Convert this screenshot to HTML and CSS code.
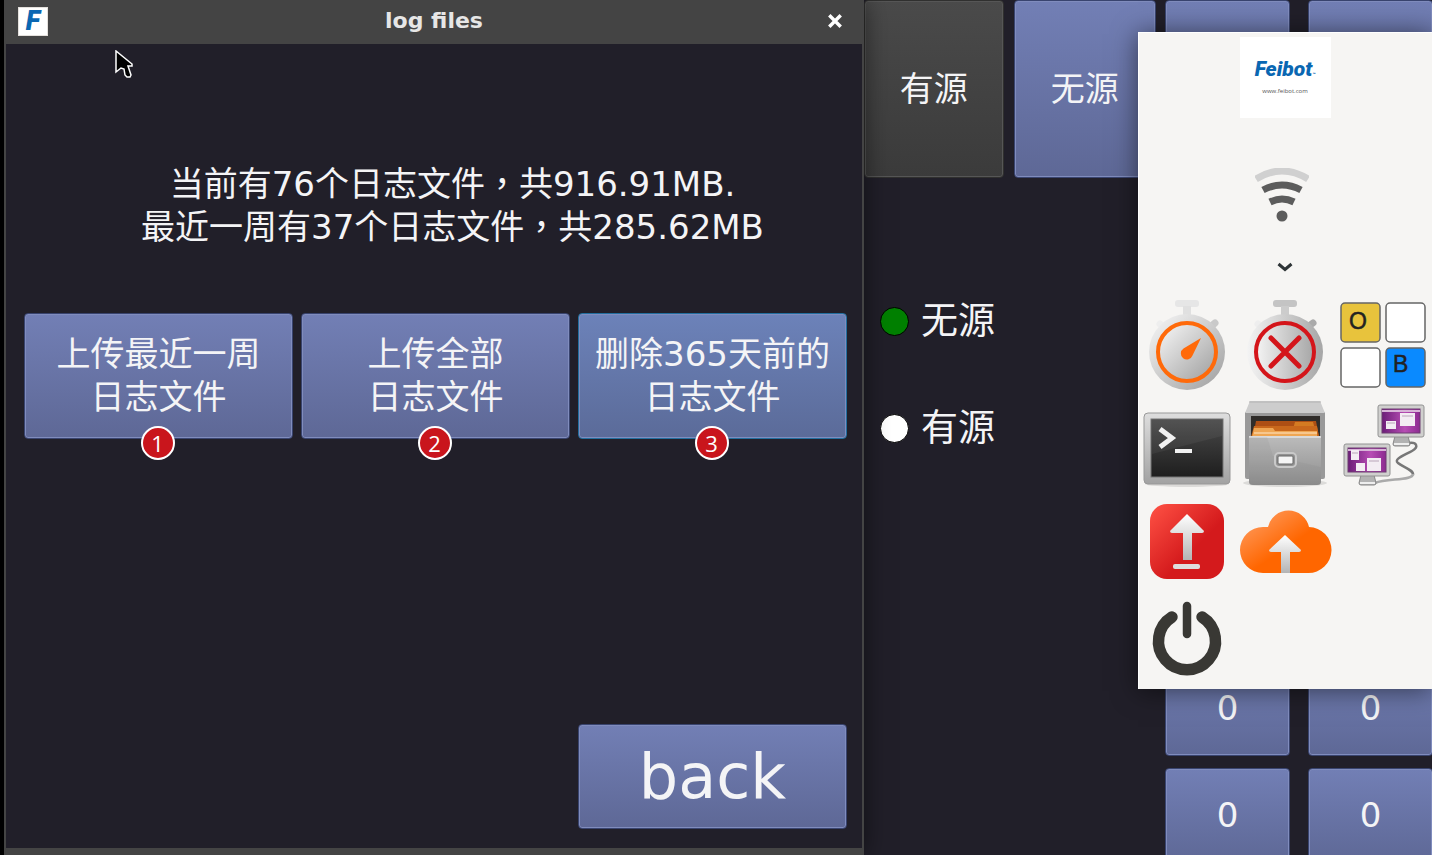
FILE: index.html
```html
<!DOCTYPE html>
<html lang="zh-CN">
<head>
<meta charset="utf-8">
<title>log files</title>
<link rel="stylesheet" href="styles.css">
</head>
<body>
<div class="desktop">
  <section class="dialog" role="dialog" aria-labelledby="dialog-title">
    <header class="titlebar">
      <span class="app-icon" aria-hidden="true">F</span>
      <h1 class="title" id="dialog-title">log files</h1>
      <button class="close" type="button" aria-label="close">
        <svg width="16" height="16" viewBox="0 0 14 14"><path d="M2 2l10 10M12 2L2 12" stroke="#fff" stroke-width="3"/></svg>
      </button>
    </header>
    <div class="dialog-body">
      <p class="message">当前有76个日志文件<span lang="zh-TW">，</span>共916.91MB.<br>最近一周有37个日志文件<span lang="zh-TW">，</span>共285.62MB</p>
      <div class="actions">
        <div class="action"><button class="key" type="button">上传最近一周<br>日志文件</button><span class="badge">1</span></div>
        <div class="action"><button class="key" type="button">上传全部<br>日志文件</button><span class="badge">2</span></div>
        <div class="action"><button class="key key-focus" type="button">删除365天前的<br>日志文件</button><span class="badge">3</span></div>
      </div>
      <div class="actions footer"><button class="key back" type="button">back</button></div>
    </div>
    <svg class="cursor" width="18" height="28" viewBox="0 0 18 28"><path d="M1 1v21l5-4 3 1 1 6 2 2h3l1-2-2-6-1-3h4v-2z" fill="#000" stroke="#fff" stroke-width="1.5"/></svg>
  </section>

  <main class="app">
    <div class="app-main">
      <div class="tabs">
        <button class="key key-dark" type="button">有源</button>
        <button class="key" type="button">无源</button>
      </div>
      <div class="sources">
        <label class="source"><input class="dot dot-green" type="radio" name="source" checked>无源</label>
        <label class="source"><input class="dot" type="radio" name="source">有源</label>
      </div>
    </div>
    <div class="keypad">
      <div class="keys">
        <button class="key" type="button" aria-label="left"></button>
        <button class="key" type="button" aria-label="right"></button>
      </div>
      <div class="keys">
        <button class="key" type="button">0</button>
        <button class="key" type="button">0</button>
        <button class="key" type="button">0</button>
        <button class="key" type="button">0</button>
      </div>
    </div>
  </main>

  <aside class="panel">
    <div class="logo"><span class="brand">Feibot<span class="tm">™</span></span><span class="site">www.feibot.com</span></div>
    <svg class="wifi" width="54" height="54" viewBox="0 0 54 54" fill="none" stroke="#5c5c5c" stroke-width="7">
      <path d="M1 11Q27-5 53 11" stroke="#d0d0d0"/><path d="M8 22Q27 12 46 22"/><path d="M15 34Q27 28 39 34"/><circle cx="27" cy="48" r="5.5" fill="#5c5c5c" stroke="none"/>
    </svg>
    <button class="expand" type="button" aria-label="expand"><svg width="16" height="10" viewBox="0 0 16 10"><path d="M1.5 2L8 7.5 14.5 2" fill="none" stroke="#2e3436" stroke-width="3"/></svg></button>
    <div class="launchers">
      <button class="launcher" type="button" aria-label="timer">
        <svg viewBox="0 0 98 98">
          <defs><linearGradient id="silver" x1="0" y1="0" x2="1" y2="1"><stop offset=".1" stop-color="#f0f0f0"/><stop offset="1" stop-color="#9d9d9d"/></linearGradient><linearGradient id="silver-h"><stop offset="0" stop-color="#f4f4f4"/><stop offset="1" stop-color="#a6a6a6"/></linearGradient></defs>
          <rect x="37" y="3" width="24" height="7" rx="3" fill="#e6e6e6"/><path d="M45 9h8v12h-8z" fill="#e0e0e0"/>
          <path d="M70 32l7-6" stroke="#c9c9c9" stroke-width="7" stroke-linecap="round"/><path d="M29 32l-7-5" stroke="#eee" stroke-width="7" stroke-linecap="round"/>
          <circle cx="49" cy="55" r="38" fill="url(#silver)"/><circle cx="49" cy="55" r="29" fill="url(#silver)" stroke="#ff6a0a" stroke-width="4"/>
          <path d="M63 41L54.5 58.500a6 6 0 1 1-9-7z" fill="#ff6a0a"/>
        </svg>
      </button>
      <button class="launcher" type="button" aria-label="stop timer">
        <svg viewBox="0 0 98 98">
          <rect x="37" y="3" width="24" height="7" rx="3" fill="#c4c4c4"/><path d="M45 9h8v12h-8z" fill="#ccc"/>
          <path d="M70 31l7-5" stroke="#aaa" stroke-width="7" stroke-linecap="round"/><path d="M29 32l-7-5" stroke="#eee" stroke-width="7" stroke-linecap="round"/>
          <circle cx="49" cy="55" r="38" fill="url(#silver-h)"/><circle cx="49" cy="55" r="29" fill="url(#silver-h)" stroke="#d4151a" stroke-width="4"/>
          <path d="M35 41l28 28M63 41L35 69" stroke="#d4151a" stroke-width="5" stroke-linecap="round"/>
        </svg>
      </button>
      <button class="launcher" type="button" aria-label="OB">
        <svg viewBox="0 0 98 98">
          <g stroke="#666" stroke-width="1.5"><rect x="7" y="6" width="39" height="39" rx="4" fill="#e8c33c"/><rect x="52" y="6" width="39" height="39" rx="4" fill="#fff"/><rect x="7" y="51" width="39" height="39" rx="4" fill="#fff"/><rect x="52" y="51" width="39" height="39" rx="4" fill="#0a8aff"/></g>
          <text class="tile" x="15" y="32">O</text><text class="tile" x="59" y="75">B</text>
        </svg>
      </button>
      <button class="launcher" type="button" aria-label="terminal">
        <svg viewBox="0 0 98 98">
          <defs><linearGradient id="screen" x1="0" y1="0" x2="0" y2="1"><stop offset="0" stop-color="#4a4a4a"/><stop offset="1" stop-color="#1e1e1e"/></linearGradient><linearGradient id="frame" x1="0" y1="0" x2="0" y2="1"><stop offset="0" stop-color="#dedede"/><stop offset="1" stop-color="#a2a2a2"/></linearGradient></defs>
          <ellipse cx="49" cy="89" rx="42" ry="3" fill="#dcdbd9"/><rect x="6" y="18" width="86" height="71" rx="4" fill="url(#frame)" stroke="#999"/>
          <rect x="13" y="24" width="72" height="58" fill="url(#screen)" stroke="#777"/><path d="M14 25h70v16L14 59z" fill="#fff" opacity=".05"/>
          <path d="M22 34l12 9-12 9" fill="none" stroke="#f2f2f2" stroke-width="5"/><path d="M37 56h17" stroke="#f2f2f2" stroke-width="4"/>
        </svg>
      </button>
      <button class="launcher" type="button" aria-label="files">
        <svg viewBox="0 0 98 98">
          <defs><linearGradient id="drawer" x1="0" y1="0" x2="0" y2="1"><stop offset="0" stop-color="#bcbcbc"/><stop offset="1" stop-color="#8e8e8e"/></linearGradient></defs>
          <ellipse cx="49" cy="88" rx="42" ry="4" fill="#dcdbd9"/><path d="M9 17h80v65q0 2-2 2H11q-2 0-2-2z" fill="#999"/><path d="M14 6h70l5 12H9z" fill="#cdcdcd"/><path d="M13 7h72" stroke="#b4b4b4"/>
          <path d="M15 21h69v21H15z" fill="#302d2a"/><path d="M20 26h60l3 16H17z" fill="#ae4f14"/><path d="M59 27h18l2 7H57z" fill="#d47b22"/><path d="M18 31h63l2 11H15z" fill="#c9681c"/><path d="M18 33h19l2 3h42v6H16z" fill="#efa653"/><path d="M18 38h63" stroke="#f7c78e" stroke-width="2"/>
          <path d="M13 41h72v46q0 3-4 3H17q-4 0-4-3z" fill="url(#drawer)"/><path d="M13 42h72" stroke="#dadada" stroke-width="2"/><path d="M31 42l6 19L85 72v14q0 4-4 4H17q-4 0-4-3V42z" fill="#777" opacity=".1"/>
          <rect x="39" y="58" width="21" height="14" rx="4" fill="#929292" stroke="#c9c9c9" stroke-width="2"/><rect x="42" y="61" width="15" height="8" rx="1" fill="#f5f5f5" stroke="#666"/>
        </svg>
      </button>
      <button class="launcher" type="button" aria-label="remote desktop">
        <svg viewBox="0 0 98 98">
          <defs><linearGradient id="violet"><stop offset="0" stop-color="#6c1d78"/><stop offset=".6" stop-color="#b74db4"/><stop offset="1" stop-color="#8c2b90"/></linearGradient>
          <g id="monitor"><path d="M17 31h13l2 8q0 2-2 2H17q-2 0-2-2z" fill="#b2b2b2" stroke="#888"/><path d="M16 39h15" stroke="#eee" stroke-width="2"/><rect width="46" height="32" rx="2" fill="#d0d0ce" stroke="#929292"/><rect x="4" y="4" width="38" height="24" fill="url(#violet)" stroke="#6d3c70"/><path d="M4 6h38" stroke="#d8b5d8" stroke-width="2"/></g></defs>
          <path d="M75 48c8-1 10 4 3 8s-19 8-14 12 16 7 15 12" fill="none" stroke="#777" stroke-width="2.5"/><path d="M79 79c0 7-26 4-38 9" fill="none" stroke="#aaa" stroke-width="2.5"/>
          <use href="#monitor" x="44" y="10"/><use href="#monitor" x="10" y="49"/>
          <g fill="#f3edf3"><path d="M66 18h15v13H66zM52 26h10v8H52zM17 55h8v10h-8zM33 63h14v13H33zM22 68h9v8h-9z"/></g><path d="M68 21h11M53 28h8M18 58h6M35 66h10" stroke="#b9a5b9"/>
        </svg>
      </button>
      <button class="launcher" type="button" aria-label="upload">
        <svg viewBox="0 0 98 98">
          <defs><linearGradient id="red" x1="0" y1="0" x2="1" y2="1"><stop offset="0" stop-color="#ff5245"/><stop offset=".6" stop-color="#d41a1c"/></linearGradient><linearGradient id="arrow" x1="0" y1="0" x2="0" y2="1"><stop offset="0" stop-color="#fff"/><stop offset="1" stop-color="#b4b4b4"/></linearGradient></defs>
          <rect x="12" y="11" width="74" height="75" rx="17" fill="url(#red)"/><path d="M49 21l17 17q0 2-2 2H54v27h-9V40H34q-2 0-2-2z" fill="url(#arrow)"/><rect x="35" y="71" width="27" height="5" rx="2" fill="#dedede"/>
        </svg>
      </button>
      <button class="launcher" type="button" aria-label="cloud upload">
        <svg viewBox="0 0 98 98">
          <defs><linearGradient id="orange" x1="0" y1="0" x2="1" y2="1"><stop offset=".1" stop-color="#ff9a5c"/><stop offset=".55" stop-color="#ff6600"/></linearGradient></defs>
          <path d="M27 80a23 23 0 1 1 0-46h5a21 21 0 0 1 41 0a23 23 0 0 1-1 46z" fill="url(#orange)"/><path d="M49 42l16 15q0 2-2 2h-9v21h-9V59H35q-2 0-2-2z" fill="url(#arrow)"/>
        </svg>
      </button>
      <button class="launcher power" type="button" aria-label="power">
        <svg viewBox="0 0 98 98" fill="none" stroke="#393834" stroke-linecap="round"><path d="M34 26A28.5 28.5 0 1 0 64 26" stroke-width="11.5"/><path d="M49 15v28" stroke-width="8.5"/></svg>
      </button>
    </div>
  </aside>
</div>
</body>
</html>
```

FILE: styles.css
```css
* { box-sizing: border-box; }

body {
  margin: 0;
  background: #000;
  color: #f4f4f6;
  font-family: "DejaVu Sans", "Noto Sans CJK SC", sans-serif;
  font-size: 34px;
  line-height: 43px;
}

button {
  margin: 0;
  padding: 0;
  border: 0;
  background: none;
  color: inherit;
  font: inherit;
}

svg { display: block; }

.desktop {
  position: relative;
  display: grid;
  grid-template-columns: 860fr 568fr;
  height: 100vh;
  padding-left: 4px;
  overflow: hidden;
}

/* raised button shared by the dialog and the keypad */
.key {
  border: 1px solid #39446f;
  border-radius: 4px;
  background: linear-gradient(#727fb5, #5e6896);
  box-shadow: inset 0 0 0 1px #808cbd;
}

.key-dark {
  border-color: #30302f;
  background: linear-gradient(#4a4a4a, #3b3b3b);
  box-shadow: inset 0 0 0 1px #565656;
}

.key-focus {
  border-color: #226e9e;
  background: linear-gradient(#6c82b9, #5b6b99);
}

/* dialog window */
.dialog {
  position: relative;
  z-index: 1;
  display: flex;
  flex-direction: column;
  min-height: 0;
  border: solid #444;
  border-width: 0 2px 7px;
  background: #211f29;
  box-shadow: 0 0 24px #0008;
}

.titlebar {
  display: grid;
  grid-template-columns: 30px 1fr 30px;
  align-items: center;
  height: 44px;
  padding: 0 12px 2px;
  background: #444;
}

.app-icon {
  height: 29px;
  border: 1px solid #e4e0dc;
  background: #fff;
  color: #0a67b2;
  font: italic 900 27px/27px Roboto, sans-serif;
  text-align: center;
}

.title {
  margin: 0;
  font-size: 22px;
  line-height: 40px;
  text-align: center;
  color: #e6e6e6;
}

.close { justify-self: center; }

.dialog-body {
  flex: 1;
  display: flex;
  flex-direction: column;
  padding: 119px 15px 19px 18px;
}

.message {
  margin: 0 0 64px;
  padding-left: 34px;
  text-align: center;
}

.actions {
  display: grid;
  grid-template-columns: repeat(3, 1fr);
  gap: 8px;
}

.action { position: relative; }

.action .key {
  width: 100%;
  height: 126px;
}

.badge {
  position: absolute;
  left: 50%;
  bottom: -21px;
  width: 34px;
  height: 34px;
  margin-left: -18px;
  border: 2px solid #fff;
  border-radius: 50%;
  background: #c9151c;
  color: #fff;
  font: 22px/30px "Open Sans", sans-serif;
  text-align: center;
}

.footer { margin-top: auto; }

.back {
  grid-column: 3;
  height: 105px;
  font-size: 62px;
}

.cursor {
  position: absolute;
  left: 109px;
  top: 50px;
}

/* application behind the windows */
.app {
  display: flex;
  gap: 9px;
  min-width: 0;
  height: 100vh;
  margin-right: -1px;
  background: #211f29;
}

.app-main { flex: 1; }

.tabs {
  display: grid;
  grid-template-columns: 140fr 143fr;
  gap: 10px;
  height: 178px;
}

.sources {
  display: grid;
  gap: 64px;
  padding: 122px 0 0 16px;
  font-size: 37px;
}

.source {
  display: flex;
  align-items: center;
  gap: 12px;
}

.dot {
  appearance: none;
  width: 29px;
  height: 29px;
  margin: 0;
  border: 1px solid #000;
  border-radius: 50%;
  background: #fff;
}

.dot-green { background: #008000; }

.keypad {
  display: flex;
  flex-direction: column;
  justify-content: space-between;
  margin-bottom: -8px;
}

.keys {
  display: grid;
  grid-template-columns: 125px 125px;
  grid-auto-rows: 95px;
  gap: 12px 18px;
}

/* launcher panel */
.panel {
  position: absolute;
  z-index: 2;
  top: 32px;
  right: 0;
  display: flex;
  flex-direction: column;
  align-items: center;
  width: 294px;
  padding-top: 5px;
  background: #f6f5f3;
  box-shadow: 0 2px 24px #0008, inset 1px 1px #fff;
}

.logo {
  display: flex;
  flex-direction: column;
  align-items: center;
  width: 91px;
  height: 81px;
  padding-top: 21px;
  background: #fff;
}

.brand {
  color: #0a67b2;
  font: italic 900 21px/22px Roboto, sans-serif;
}

.tm { font-size: 5px; }

.site {
  color: #555;
  font: 6px/20px "Open Sans", sans-serif;
  line-height: 12px;
}

.wifi { margin: 50px 6px 0 0; }

.expand { margin: 40px 0 25px; }

.launchers {
  display: grid;
  grid-template-columns: repeat(3, 98px);
}

.launcher { height: 98px; }

.power { grid-column: 1; }

.tile {
  fill: #222;
  stroke: #222;
  stroke-width: 0.5px;
  font: 23px "Liberation Sans", sans-serif;
}
```
